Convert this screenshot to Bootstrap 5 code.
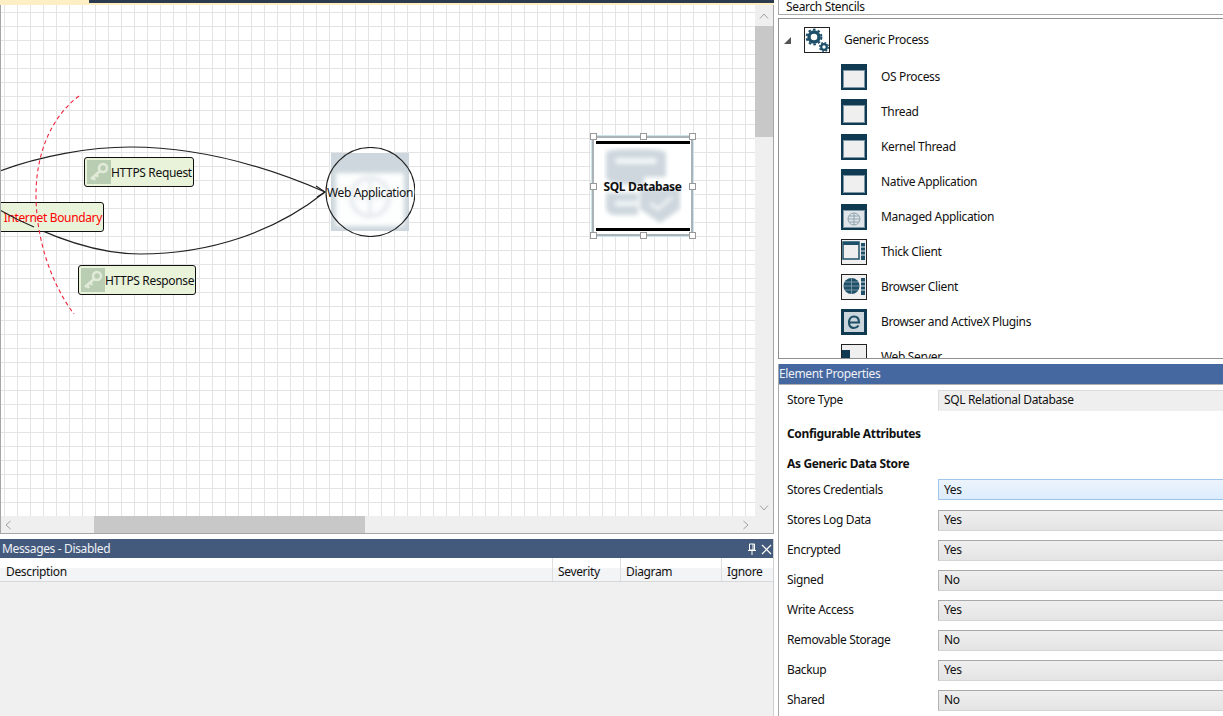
<!DOCTYPE html>
<html lang="en"><head><meta charset="utf-8"><title>Threat Model</title>
<link href="https://cdn.jsdelivr.net/npm/bootstrap@5.3.0/dist/css/bootstrap.min.css" rel="stylesheet">
<style>
html,body{height:716px;overflow:hidden}
body{font-family:"Noto Sans","Open Sans",sans-serif;font-size:12px;color:#111;background:#fff;line-height:1.2;width:1223px;letter-spacing:-.35px}
.app-root{height:716px}
.left-col{width:774px;flex:none}
.right-col{width:449px;flex:none;padding-left:3px}
.tab-strip{height:3px;background:#2b3a4f;flex:none}
.tab-active{width:89px;background:#fdeec3}
.tab-rule{height:2px;background:#fdeec3;flex:none}
.canvas-frame{height:529px;flex:none;border-left:1px solid #a6a6a6;border-right:1px solid #a6a6a6;border-bottom:1px solid #a6a6a6}
.canvas-area{position:relative;overflow:hidden;flex:1 1 auto;background-color:#fff;background-image:linear-gradient(#e4e4e4 1px,transparent 1px),linear-gradient(90deg,#e4e4e4 1px,transparent 1px);background-size:13px 14px;background-position:3px 7px}
.vbar{width:18px;flex:none;background:#efefef}
.hbar{height:17px;flex:none;background:#efefef}
.sb-btn{height:21px;flex:none;color:#999}
.sb-btn-low{height:17px}
.sb-thumb{background:#c8c8c8}
.v-thumb{height:111px}
.h-gap{width:93px}
.h-thumb{width:271px}
.h-rest{padding-right:24px}
.curves{position:absolute;left:-1px;top:-5px;width:773px;height:528px}
.flow-tag{position:absolute;height:30px;background:#e9f3d9;border:1px solid #111;border-radius:3px;white-space:nowrap}
.tag-req{left:83px;top:152px;width:110px}
.tag-res{left:77px;top:260px;width:118px}
.tag-bnd{left:-4px;top:197px;width:107px;color:#f00}
.tag-txt{padding-top:2px}
.bnd-txt{margin-right:1px}
.tag-ico{width:24px;height:24px;background:#b9cdb2;margin-left:2px;flex:none}
.node-web{position:absolute;left:324px;top:142px;width:90px;height:90px}
.web-label{position:absolute;left:0;right:0;top:39px;text-align:center;white-space:nowrap}
.store{position:absolute;left:591px;top:131px;width:101px;height:100px;border:2px solid #aab4b8;background:#fff;outline:1px solid #cfe4ea}
.store-bar{position:absolute;left:2px;right:1px;height:3px;background:#000}
.bar-top{top:3px}
.bar-bot{bottom:3px}
.store-img{position:absolute;left:10px;top:9px;width:78px;height:78px}
.store-label{position:absolute;left:0;right:0;top:42px;text-align:center;font-weight:700;white-space:nowrap}
.grip{position:absolute;width:7px;height:7px;background:#fff;border:1px solid #999}
.g-tl{left:-4px;top:-5px}.g-tc{left:46px;top:-5px}.g-tr{left:95px;top:-5px}
.g-ml{left:-4px;top:45px}.g-mr{left:95px;top:45px}
.g-bl{left:-4px;top:94px}.g-bc{left:46px;top:94px}.g-br{left:95px;top:94px}
.dock-head{height:19px;background:#445a7d;color:#eef1f6;padding:1px 0 0 2px;flex:none}
.msg-panel{margin-top:5px;flex:1 1 auto;border-right:1px solid #d0d0d0}
.head-icons{padding-right:1px}
.col-heads{height:24px;flex:none;background:linear-gradient(#fff 10px,#f3f4f6 10px);border-bottom:1px solid #d8d8d8}
.col-h{padding:5px 0 0 5px;border-right:1px solid #dedede;height:100%;display:flex;align-items:center;flex:none}
.c-desc{width:553px;padding-left:6px}.c-sev{width:68px}.c-dia{width:101px}.c-ign{flex:1 1 auto;border-right:0}
.msg-body{flex:1 1 auto;background:#f0f0f0}
.search-row{height:15px;flex:none;border-bottom:1px solid #a8a8a8;border-left:1px solid #a8a8a8;padding-left:7px;margin-left:1px;display:flex;align-items:center}
.tree-panel{height:341px;margin-top:3px;flex:none;overflow:hidden;border:1px solid #8f8f8f;border-right:0;margin-left:1px;position:relative}
.tree-head{height:38px;padding-left:5px;margin-top:2px;flex:none}
.tree-arrow{width:0;height:0;border-style:solid;border-width:0 0 7px 7px;border-color:transparent transparent #555 transparent;margin-right:13px;flex:none}
.sten-ico{width:26px;height:26px;flex:none}
.tree-head .sten-ico{margin-right:14px}
.tree-item{height:35px;padding:1px 0 0 62px;flex:none}
.tree-item .sten-ico{margin-right:14px}
.prop-panel{flex:1 1 auto;margin-top:5px;margin-left:1px;border-left:1px solid #a8a8a8;overflow:hidden}
.prop-head{height:19px;background:#4668a0;color:#eef1f6;padding:1px 0 0 1px;flex:none;border-bottom:1px solid #b0b0b0;box-sizing:content-box;margin-left:-1px}
.prop-row{height:30px;padding-left:8px;flex:none}
.prop-lbl{width:151px;flex:none}
.prop-val{flex:1 1 auto;height:21px;padding-left:5px;display:flex;align-items:center;border-top:1px solid #a9a9a9;border-left:1px solid #b4b4b4;border-bottom:1px solid #d4d4d4;background:linear-gradient(#efefef,#e4e4e4)}
.val-flat{background:#efefef;border-top-color:#dcdcdc;border-left-color:#dcdcdc;border-bottom-color:#efefef}
.val-hot{background:linear-gradient(#ecf4fc,#dcecfc);border:1px solid #9fc5e8;border-right:0;padding-top:2px}
.prop-title{font-weight:700;padding-left:8px;flex:none}
.t-cfg{height:30px;margin-top:4px}
.t-gen{height:30px}
.t-stores{height:21px;margin-bottom:5px}
.t-stores .prop-lbl{padding-top:2px}
</style></head>
<body>
<svg width="0" height="0" class="position-absolute"><defs>
<filter id="fz" x="-10%" y="-10%" width="120%" height="120%"><feGaussianBlur stdDeviation="2"/></filter>
<filter id="fs"><feGaussianBlur stdDeviation=".5"/></filter>
<symbol id="win" viewBox="0 0 26 26"><rect width="26" height="26" fill="#0f3a52"/><rect x="2" y="6" width="22" height="18" fill="#7d97a5"/><rect x="3" y="7" width="20" height="16" fill="#efefef"/></symbol>
</defs></svg>
<div class="app-root d-flex">
 <div class="left-col d-flex flex-column">
  <div class="tab-strip d-flex"><div class="tab-active"></div></div>
  <div class="tab-rule"></div>
  <div class="canvas-frame d-flex flex-column">
   <div class="d-flex flex-grow-1 overflow-hidden">
    <div class="canvas-area">
     <svg class="curves" viewBox="0 0 773 528" fill="none">
      <path d="M0 171C40 156 90 147 130 147C200 147 270 168 325 192" stroke="#222" stroke-width="1.2"/>
      <path d="M0 210C45 235 95 254 140 254C210 254 275 232 325 192" stroke="#222" stroke-width="1.2"/>
     </svg>
     <div class="flow-tag tag-req d-flex align-items-center"><svg class="tag-ico" viewBox="0 0 24 24"><g filter="url(#fs)" stroke="#e2ebd9" fill="none"><circle cx="16" cy="8" r="4" stroke-width="2.5"/><path d="M13 11L4 19M6 17l2 3M9 14l2 3" stroke-width="2.5"/></g></svg><span class="tag-txt">HTTPS Request</span></div>
     <div class="flow-tag tag-res d-flex align-items-center"><svg class="tag-ico" viewBox="0 0 24 24"><g filter="url(#fs)" stroke="#e2ebd9" fill="none"><circle cx="16" cy="8" r="4" stroke-width="2.5"/><path d="M13 11L4 19M6 17l2 3M9 14l2 3" stroke-width="2.5"/></g></svg><span class="tag-txt">HTTPS Response</span></div>
     <div class="flow-tag tag-bnd d-flex align-items-center"><span class="tag-txt bnd-txt ms-auto">Internet Boundary</span></div>
     <svg class="curves" viewBox="0 0 773 528" fill="none">
      <path d="M0 210C12 217 22 222 34 227" stroke="#222" stroke-width="1.2"/>
      <path d="M79 96C50 118 36 155 36 195C36 240 52 285 74 314" stroke="#f0233c" stroke-width="1.1" stroke-dasharray="4 3"/>
     </svg>
     <div class="node-web">
      <svg width="90" height="90" viewBox="0 0 90 90" fill="none">
       <circle cx="45.5" cy="45" r="44.5" fill="#fff"/>
       <rect x="6" y="6" width="78" height="78" fill="#cdd7dd"/>
       <g filter="url(#fz)"><rect x="11" y="26" width="68" height="53" fill="#fdfefe"/><circle cx="45" cy="50" r="19" fill="none" stroke="#e9edf0" stroke-width="5"/><path d="M26 50H64M45 31V69" stroke="#e9edf0" stroke-width="4"/></g>
       <circle cx="45.5" cy="45" r="44.5" stroke="#222" stroke-width="1.1"/>
      </svg>
      <div class="web-label">Web Application</div>
     </div>
     <svg class="curves" viewBox="0 0 773 528" fill="none"><path d="M316 186L325 192L317 197" stroke="#222" stroke-width="1.1"/></svg>
     <div class="store">
      <div class="store-bar bar-top"></div><div class="store-bar bar-bot"></div>
      <svg class="store-img" viewBox="0 0 78 78"><g filter="url(#fz)"><path d="M2 6Q2 2 30 2Q62 2 62 6V30H40V38Q2 38 2 30Z" fill="#cdd7dd"/><rect x="11" y="11" width="42" height="6" rx="3" fill="#f2f5f6"/><path d="M2 46H34V68H12Q2 68 2 60Z" fill="#cdd7dd"/><rect x="11" y="54" width="24" height="5" fill="#f2f5f6"/><path d="M36 42H76V62L56 76L36 62Z" fill="#cdd7dd"/><path d="M46 56L54 62L68 50" stroke="#eef2f4" stroke-width="3.500" fill="none"/></g></svg>
      <div class="store-label">SQL Database</div>
      <i class="grip g-tl"></i><i class="grip g-tc"></i><i class="grip g-tr"></i><i class="grip g-ml"></i><i class="grip g-mr"></i><i class="grip g-bl"></i><i class="grip g-bc"></i><i class="grip g-br"></i>
     </div>
    </div>
    <div class="vbar d-flex flex-column">
     <div class="sb-btn d-flex align-items-center justify-content-center"><svg width="10" height="6" viewBox="0 0 10 6" fill="none"><path d="M1 5.5L5 1L9 5.5" stroke="#a0a0a0"/></svg></div>
     <div class="sb-thumb v-thumb"></div>
     <div class="flex-grow-1"></div>
     <div class="sb-btn sb-btn-low d-flex align-items-center justify-content-center"><svg width="10" height="6" viewBox="0 0 10 6" fill="none"><path d="M1 .5L5 5L9 .5" stroke="#a0a0a0"/></svg></div>
    </div>
   </div>
   <div class="hbar d-flex">
    <div class="h-gap d-flex align-items-center ps-1"><svg width="6" height="10" viewBox="0 0 6 10" fill="none"><path d="M5.5 1L1 5L5.5 9" stroke="#a0a0a0"/></svg></div>
    <div class="sb-thumb h-thumb"></div>
    <div class="h-rest flex-grow-1 d-flex align-items-center justify-content-end"><svg width="6" height="10" viewBox="0 0 6 10" fill="none"><path d="M.5 1L5 5L.5 9" stroke="#a0a0a0"/></svg></div>
   </div>
  </div>
  <div class="msg-panel d-flex flex-column">
   <div class="dock-head d-flex align-items-center justify-content-between"><span>Messages - Disabled</span>
    <span class="head-icons d-flex align-items-center gap-1">
     <svg width="10" height="12" viewBox="0 0 10 12" fill="none" stroke="#fff"><path d="M2.5 1H7.5V7H2.5ZM6 1V7M1 7.5H9M5 8V12"/></svg>
     <svg width="11" height="11" viewBox="0 0 11 11" fill="none" stroke="#fff" stroke-width="1.2"><path d="M1 1L10 10M10 1L1 10"/></svg>
    </span></div>
   <div class="col-heads d-flex">
    <div class="col-h c-desc">Description</div><div class="col-h c-sev">Severity</div><div class="col-h c-dia">Diagram</div><div class="col-h c-ign">Ignore</div>
   </div>
   <div class="msg-body"></div>
  </div>
 </div>
 <div class="right-col d-flex flex-column">
  <div class="search-row">Search Stencils</div>
  <div class="tree-panel">
   <div class="tree-head d-flex align-items-center"><span class="tree-arrow"></span>
    <svg class="sten-ico" viewBox="0 0 26 26"><rect x=".5" y=".5" width="25" height="25" fill="#fff" stroke="#222"/><g fill="none" stroke="#1e4f69"><circle cx="10" cy="10" r="5" stroke-width="3.4"/><circle cx="10" cy="10" r="7.4" stroke-width="2" stroke-dasharray="2.600 2.200"/><circle cx="20" cy="20" r="2.800" stroke-width="2.200"/><circle cx="20" cy="20" r="4.400" stroke-width="1.400" stroke-dasharray="1.800 1.650"/></g></svg>
    <span>Generic Process</span></div>
   <div class="tree-item d-flex align-items-center"><svg class="sten-ico"><use href="#win"/></svg><span>OS Process</span></div>
   <div class="tree-item d-flex align-items-center"><svg class="sten-ico"><use href="#win"/></svg><span>Thread</span></div>
   <div class="tree-item d-flex align-items-center"><svg class="sten-ico"><use href="#win"/></svg><span>Kernel Thread</span></div>
   <div class="tree-item d-flex align-items-center"><svg class="sten-ico"><use href="#win"/></svg><span>Native Application</span></div>
   <div class="tree-item d-flex align-items-center"><svg class="sten-ico" viewBox="0 0 26 26"><use href="#win" width="26" height="26"/><rect x="3" y="7" width="20" height="16" fill="#dfe5e8"/><g fill="none" stroke="#8ea4b0"><circle cx="13" cy="15" r="6"/><path d="M7 15H19M13 9V21M8 12H18M8 18H18"/></g></svg><span>Managed Application</span></div>
   <div class="tree-item d-flex align-items-center"><svg class="sten-ico" viewBox="0 0 26 26"><rect x=".5" y=".5" width="25" height="25" fill="#f0f0f0" stroke="#222"/><rect x="2" y="3" width="16" height="17" fill="#efefef" stroke="#1e5069" stroke-width="1.5"/><rect x="2" y="3" width="16" height="3" fill="#1e5069"/><path d="M20 4h4v17h-4z" fill="#1e5069"/><path d="M20 8h4M20 12h4M20 16h4" stroke="#dfe6ea"/></svg><span>Thick Client</span></div>
   <div class="tree-item d-flex align-items-center"><svg class="sten-ico" viewBox="0 0 26 26"><rect x=".5" y=".5" width="25" height="25" fill="#f0f0f0" stroke="#222"/><circle cx="10.5" cy="12" r="8" fill="#1e5069"/><path d="M2 12H19M10.500 4V20M4 8H17M4 16H17" stroke="#8ea4b0" stroke-width=".8"/><path d="M20 4h4v17h-4z" fill="#1e5069"/><path d="M20 8h4M20 12h4M20 16h4" stroke="#dfe6ea"/></svg><span>Browser Client</span></div>
   <div class="tree-item d-flex align-items-center"><svg class="sten-ico" viewBox="0 0 26 26"><rect width="26" height="26" fill="#0f3a52"/><rect x="3" y="3" width="20" height="20" fill="#cbd6dc"/><path d="M8 13.500H18C18 9 15.500 7.500 13 7.500C10 7.500 8 10 8 13.500C8 17 10 19 13 19C15 19 16.500 18 17.500 16.500" fill="none" stroke="#1e4f69" stroke-width="2.200"/></svg><span>Browser and ActiveX Plugins</span></div>
   <div class="tree-item d-flex align-items-center"><svg class="sten-ico" viewBox="0 0 26 26"><rect x=".5" y=".5" width="25" height="25" fill="#efefef" stroke="#222"/><rect width="8" height="8" y="6" x="1" fill="#0f3a52"/></svg><span>Web Server</span></div>
  </div>
  <div class="prop-panel d-flex flex-column">
   <div class="prop-head d-flex align-items-center">Element Properties</div>
   <div class="prop-row d-flex align-items-center"><span class="prop-lbl">Store Type</span><div class="prop-val val-flat">SQL Relational Database</div></div>
   <div class="prop-title t-cfg d-flex align-items-center">Configurable Attributes</div>
   <div class="prop-title t-gen d-flex align-items-center">As Generic Data Store</div>
   <div class="prop-row t-stores d-flex align-items-center"><span class="prop-lbl">Stores Credentials</span><div class="prop-val val-hot">Yes</div></div>
   <div class="prop-row d-flex align-items-center"><span class="prop-lbl">Stores Log Data</span><div class="prop-val">Yes</div></div>
   <div class="prop-row d-flex align-items-center"><span class="prop-lbl">Encrypted</span><div class="prop-val">Yes</div></div>
   <div class="prop-row d-flex align-items-center"><span class="prop-lbl">Signed</span><div class="prop-val">No</div></div>
   <div class="prop-row d-flex align-items-center"><span class="prop-lbl">Write Access</span><div class="prop-val">Yes</div></div>
   <div class="prop-row d-flex align-items-center"><span class="prop-lbl">Removable Storage</span><div class="prop-val">No</div></div>
   <div class="prop-row d-flex align-items-center"><span class="prop-lbl">Backup</span><div class="prop-val">Yes</div></div>
   <div class="prop-row d-flex align-items-center"><span class="prop-lbl">Shared</span><div class="prop-val">No</div></div>
  </div>
 </div>
</div>
<script src="https://cdn.jsdelivr.net/npm/bootstrap@5.3.0/dist/js/bootstrap.bundle.min.js"></script>
</body></html>
